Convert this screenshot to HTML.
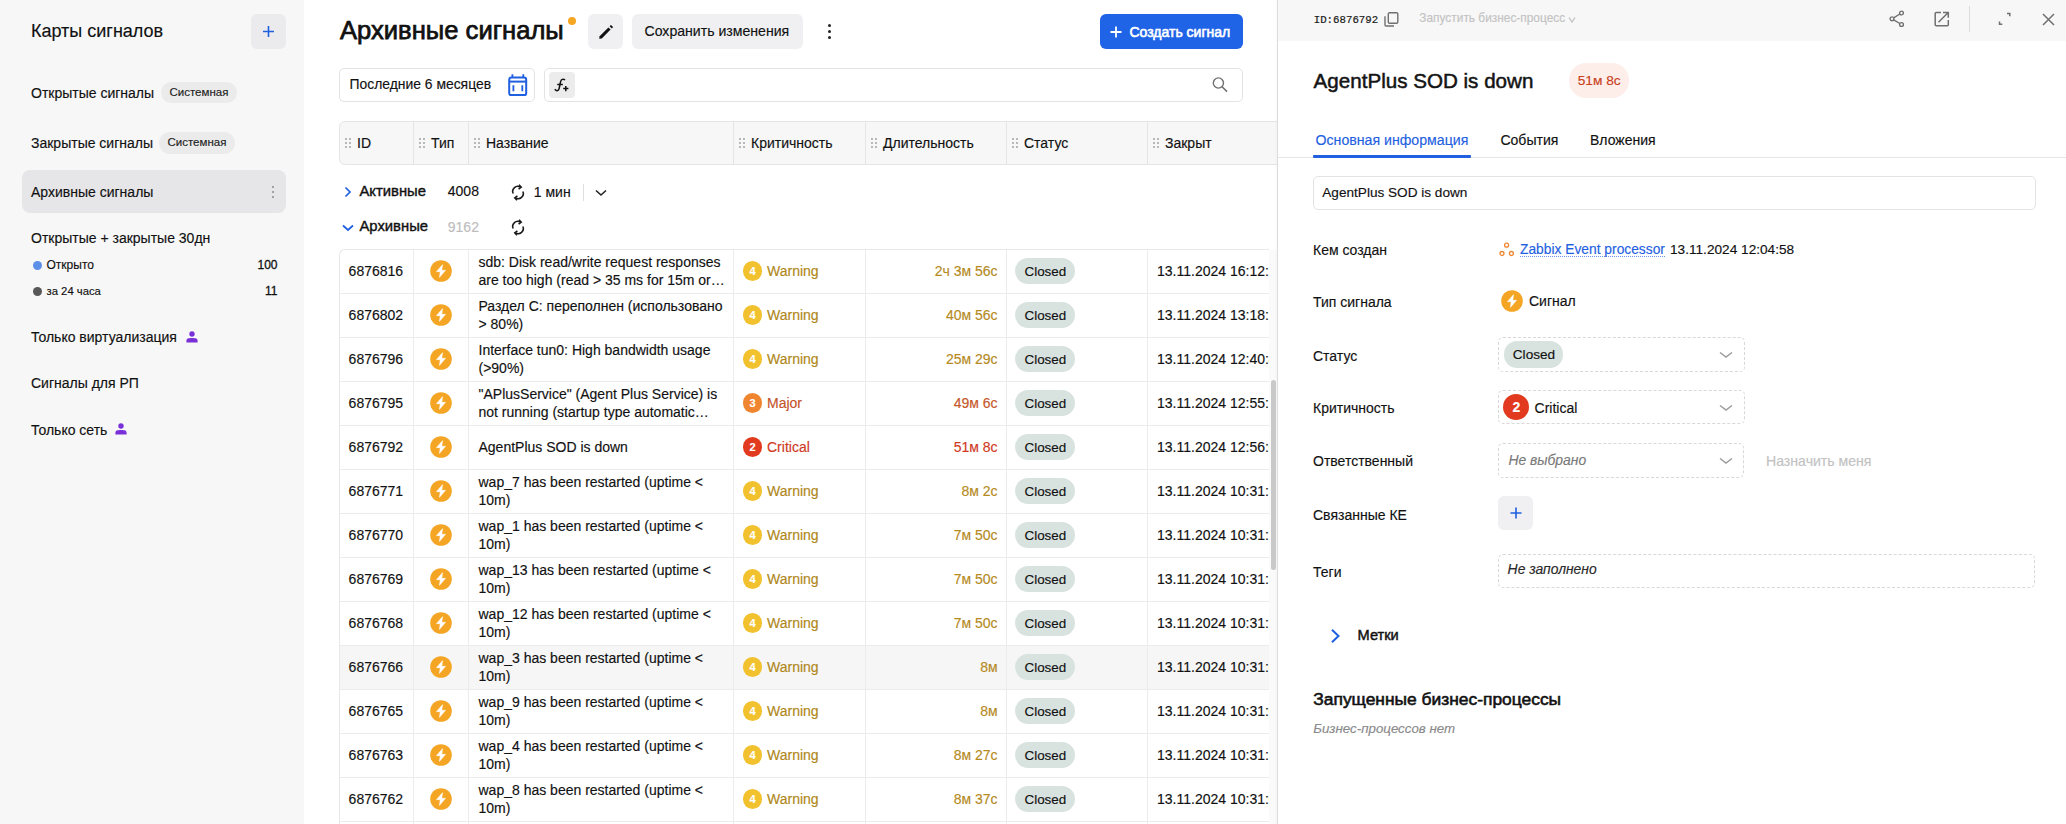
<!DOCTYPE html>
<html><head><meta charset="utf-8"><style>
html,body{margin:0;padding:0;}
body{width:2066px;height:824px;overflow:hidden;position:relative;background:#fff;font-family:"Liberation Sans", sans-serif;}
.t{position:absolute;white-space:nowrap;line-height:1;-webkit-text-stroke-width:0.15px;}
.r{position:absolute;display:block;}
</style></head><body>
<div class="r" style="left:0.00px;top:0.00px;width:304.00px;height:824.00px;background:#f7f7f7;"></div>
<div class="t" style="left:31.00px;top:22.26px;font-size:18px;color:#111111;font-weight:400;font-style:normal;font-family:'Liberation Sans', sans-serif;">Карты сигналов</div>
<div class="r" style="left:251.00px;top:14.00px;width:35.00px;height:35.00px;background:#ebebed;border-radius:6px;"></div>
<svg class="r" style="left:262.00px;top:25.00px;" width="13" height="13" viewBox="0 0 13 13"><path d="M6.5 1v11M1 6.5h11" stroke="#1f5fe0" stroke-width="1.6" fill="none"/></svg>
<div class="t" style="left:31.00px;top:86.15px;font-size:14px;color:#111111;font-weight:400;font-style:normal;font-family:'Liberation Sans', sans-serif;">Открытые сигналы</div>
<div class="r" style="left:161.00px;top:82.00px;width:76.00px;height:21.00px;background:#ebebeb;border-radius:11px;"></div>
<div class="t" style="left:169.50px;top:87.46px;font-size:11.5px;color:#222;font-weight:400;font-style:normal;font-family:'Liberation Sans', sans-serif;">Системная</div>
<div class="t" style="left:31.00px;top:136.15px;font-size:14px;color:#111111;font-weight:400;font-style:normal;font-family:'Liberation Sans', sans-serif;">Закрытые сигналы</div>
<div class="r" style="left:159.00px;top:132.00px;width:76.00px;height:22.00px;background:#ebebeb;border-radius:11px;"></div>
<div class="t" style="left:167.50px;top:137.46px;font-size:11.5px;color:#222;font-weight:400;font-style:normal;font-family:'Liberation Sans', sans-serif;">Системная</div>
<div class="r" style="left:22.00px;top:170.00px;width:264.00px;height:43.00px;background:#e6e6e8;border-radius:8px;"></div>
<div class="t" style="left:31.00px;top:185.15px;font-size:14px;color:#111111;font-weight:400;font-style:normal;font-family:'Liberation Sans', sans-serif;">Архивные сигналы</div>
<div class="r" style="left:272.00px;top:185.80px;width:2.40px;height:2.40px;background:#8a8a8a;border-radius:50%;"></div>
<div class="r" style="left:272.00px;top:190.80px;width:2.40px;height:2.40px;background:#8a8a8a;border-radius:50%;"></div>
<div class="r" style="left:272.00px;top:195.80px;width:2.40px;height:2.40px;background:#8a8a8a;border-radius:50%;"></div>
<div class="t" style="left:31.00px;top:230.85px;font-size:14px;color:#111111;font-weight:400;font-style:normal;font-family:'Liberation Sans', sans-serif;">Открытые + закрытые 30дн</div>
<div class="r" style="left:33.10px;top:260.50px;width:9.00px;height:9.00px;background:#5b8fe8;border-radius:50%;"></div>
<div class="t" style="left:46.50px;top:259.04px;font-size:12px;color:#111111;font-weight:400;font-style:normal;font-family:'Liberation Sans', sans-serif;">Открыто</div>
<div class="t" style="right:1788.50px;top:259.04px;font-size:12px;color:#111111;font-weight:400;font-style:normal;font-family:'Liberation Sans', sans-serif;-webkit-text-stroke:0.3px #111;">100</div>
<div class="r" style="left:32.90px;top:286.50px;width:9.00px;height:9.00px;background:#585858;border-radius:50%;"></div>
<div class="t" style="left:46.50px;top:285.83px;font-size:11.3px;color:#111111;font-weight:400;font-style:normal;font-family:'Liberation Sans', sans-serif;">за 24 часа</div>
<div class="t" style="right:1788.50px;top:285.24px;font-size:12px;color:#111111;font-weight:400;font-style:normal;font-family:'Liberation Sans', sans-serif;-webkit-text-stroke:0.3px #111;">11</div>
<div class="t" style="left:31.00px;top:330.15px;font-size:14px;color:#111111;font-weight:400;font-style:normal;font-family:'Liberation Sans', sans-serif;">Только виртуализация</div>
<svg class="r" style="left:186.00px;top:331.00px;" width="12" height="12" viewBox="0 0 12 12"><circle cx="6" cy="3" r="2.7" fill="#7a30d8"/><path d="M0.4 11.6 V9.8 C0.4 7.6 2 6.9 6 6.9 C10 6.9 11.6 7.6 11.6 9.8 V11.6 Z" fill="#7a30d8"/></svg>
<div class="t" style="left:31.00px;top:376.15px;font-size:14px;color:#111111;font-weight:400;font-style:normal;font-family:'Liberation Sans', sans-serif;">Сигналы для РП</div>
<div class="t" style="left:31.00px;top:422.75px;font-size:14px;color:#111111;font-weight:400;font-style:normal;font-family:'Liberation Sans', sans-serif;">Только сеть</div>
<svg class="r" style="left:114.80px;top:423.20px;" width="12" height="12" viewBox="0 0 12 12"><circle cx="6" cy="3" r="2.7" fill="#7a30d8"/><path d="M0.4 11.6 V9.8 C0.4 7.6 2 6.9 6 6.9 C10 6.9 11.6 7.6 11.6 9.8 V11.6 Z" fill="#7a30d8"/></svg>
<div class="t" style="left:340.00px;top:18.02px;font-size:25.6px;color:#111;font-weight:400;font-style:normal;font-family:'Liberation Sans', sans-serif;-webkit-text-stroke:0.75px #111;">Архивные сигналы</div>
<div class="r" style="left:568.00px;top:16.80px;width:8.00px;height:8.00px;background:#f5a623;border-radius:50%;"></div>
<div class="r" style="left:588.00px;top:14.00px;width:35.00px;height:35.00px;background:#f0f0f2;border-radius:6px;"></div>
<svg class="r" style="left:596.00px;top:22.00px;" width="20" height="20" viewBox="0 0 20 20"><path d="M3.2 16.8 L3.6 14.2 L12.4 5.4 L14.6 7.6 L5.8 16.4 Z" fill="#111"/><path d="M13.6 4.2 L14.9 2.9 L17.1 5.1 L15.8 6.4 Z" fill="#111"/></svg>
<div class="r" style="left:632.00px;top:14.00px;width:171.00px;height:35.00px;background:#f0f0f2;border-radius:6px;"></div>
<div class="t" style="left:644.50px;top:24.06px;font-size:14.1px;color:#111111;font-weight:400;font-style:normal;font-family:'Liberation Sans', sans-serif;">Сохранить изменения</div>
<div class="r" style="left:827.50px;top:24.00px;width:3.00px;height:3.00px;background:#222;border-radius:50%;"></div>
<div class="r" style="left:827.50px;top:30.00px;width:3.00px;height:3.00px;background:#222;border-radius:50%;"></div>
<div class="r" style="left:827.50px;top:36.00px;width:3.00px;height:3.00px;background:#222;border-radius:50%;"></div>
<div class="r" style="left:1100.00px;top:14.00px;width:142.50px;height:35.00px;background:#1f63e6;border-radius:6px;"></div>
<svg class="r" style="left:1110.00px;top:26.00px;" width="12" height="12" viewBox="0 0 12 12"><path d="M6 0.5v11M0.5 6h11" stroke="#fff" stroke-width="1.8" fill="none"/></svg>
<div class="t" style="left:1129.50px;top:24.65px;font-size:14px;color:#fff;font-weight:400;font-style:normal;font-family:'Liberation Sans', sans-serif;-webkit-text-stroke:0.6px #fff;">Создать сигнал</div>
<div class="r" style="left:339.00px;top:68.00px;width:196.00px;height:34.00px;background:#fff;border:1px solid #e3e3e3;border-radius:5px;box-sizing:border-box;"></div>
<div class="t" style="left:349.50px;top:77.83px;font-size:13.9px;color:#111111;font-weight:400;font-style:normal;font-family:'Liberation Sans', sans-serif;">Последние 6 месяцев</div>
<svg class="r" style="left:507.00px;top:73.00px;" width="22" height="24" viewBox="0 0 22 24"><rect x="2.2" y="4.5" width="17" height="17.6" rx="2.2" fill="none" stroke="#1f5fe0" stroke-width="2"/><path d="M2.2 8.6h17" stroke="#1f5fe0" stroke-width="2"/><path d="M5.4 1.2v3.8M16.3 1.2v3.8M6.4 12.3v6M15.3 12.3v6" stroke="#1f5fe0" stroke-width="1.8"/></svg>
<div class="r" style="left:544.00px;top:68.00px;width:699.00px;height:34.00px;background:#fff;border:1px solid #e3e3e3;border-radius:5px;box-sizing:border-box;"></div>
<div class="r" style="left:549.00px;top:72.00px;width:26.00px;height:26.00px;background:#ececec;border-radius:4px;"></div>
<svg class="r" style="left:549.00px;top:72.00px;" width="26" height="26" viewBox="0 0 26 26"><path d="M6.2 17.6 C7 19 9.3 19.2 10 17 C10.6 15 11.2 10.5 11.8 9 C12.4 7.3 14 6.8 15.6 7.6" fill="none" stroke="#111" stroke-width="1.5" stroke-linecap="round"/><path d="M8.3 12.5 H13.8" stroke="#111" stroke-width="1.5"/><path d="M16.8 14 V19.2 M14.2 16.6 H19.4" stroke="#111" stroke-width="1.5"/></svg>
<svg class="r" style="left:1211.00px;top:75.00px;" width="18" height="18" viewBox="0 0 18 18"><circle cx="7.4" cy="8" r="5.1" fill="none" stroke="#707070" stroke-width="1.4"/><path d="M11.1 11.7 L16 16.6" stroke="#707070" stroke-width="1.6"/></svg>
<div class="r" style="left:339.00px;top:121.00px;width:951.00px;height:44.00px;background:#f7f7f7;border:1px solid #e5e5e5;border-radius:6px 0 0 6px;box-sizing:border-box;"></div>
<svg class="r" style="left:344.50px;top:138.00px;" width="6" height="10" viewBox="0 0 6 10"><circle cx="1" cy="1" r="0.9" fill="#9a9a9a"/><circle cx="1" cy="5" r="0.9" fill="#9a9a9a"/><circle cx="1" cy="9" r="0.9" fill="#9a9a9a"/><circle cx="5" cy="1" r="0.9" fill="#9a9a9a"/><circle cx="5" cy="5" r="0.9" fill="#9a9a9a"/><circle cx="5" cy="9" r="0.9" fill="#9a9a9a"/></svg>
<div class="t" style="left:357.00px;top:136.15px;font-size:14px;color:#111111;font-weight:400;font-style:normal;font-family:'Liberation Sans', sans-serif;">ID</div>
<div class="r" style="left:413.00px;top:122.00px;width:1.00px;height:42.00px;background:#e5e5e5;"></div>
<svg class="r" style="left:418.50px;top:138.00px;" width="6" height="10" viewBox="0 0 6 10"><circle cx="1" cy="1" r="0.9" fill="#9a9a9a"/><circle cx="1" cy="5" r="0.9" fill="#9a9a9a"/><circle cx="1" cy="9" r="0.9" fill="#9a9a9a"/><circle cx="5" cy="1" r="0.9" fill="#9a9a9a"/><circle cx="5" cy="5" r="0.9" fill="#9a9a9a"/><circle cx="5" cy="9" r="0.9" fill="#9a9a9a"/></svg>
<div class="t" style="left:431.00px;top:136.15px;font-size:14px;color:#111111;font-weight:400;font-style:normal;font-family:'Liberation Sans', sans-serif;">Тип</div>
<div class="r" style="left:468.00px;top:122.00px;width:1.00px;height:42.00px;background:#e5e5e5;"></div>
<svg class="r" style="left:473.50px;top:138.00px;" width="6" height="10" viewBox="0 0 6 10"><circle cx="1" cy="1" r="0.9" fill="#9a9a9a"/><circle cx="1" cy="5" r="0.9" fill="#9a9a9a"/><circle cx="1" cy="9" r="0.9" fill="#9a9a9a"/><circle cx="5" cy="1" r="0.9" fill="#9a9a9a"/><circle cx="5" cy="5" r="0.9" fill="#9a9a9a"/><circle cx="5" cy="9" r="0.9" fill="#9a9a9a"/></svg>
<div class="t" style="left:486.00px;top:136.15px;font-size:14px;color:#111111;font-weight:400;font-style:normal;font-family:'Liberation Sans', sans-serif;">Название</div>
<div class="r" style="left:733.00px;top:122.00px;width:1.00px;height:42.00px;background:#e5e5e5;"></div>
<svg class="r" style="left:738.50px;top:138.00px;" width="6" height="10" viewBox="0 0 6 10"><circle cx="1" cy="1" r="0.9" fill="#9a9a9a"/><circle cx="1" cy="5" r="0.9" fill="#9a9a9a"/><circle cx="1" cy="9" r="0.9" fill="#9a9a9a"/><circle cx="5" cy="1" r="0.9" fill="#9a9a9a"/><circle cx="5" cy="5" r="0.9" fill="#9a9a9a"/><circle cx="5" cy="9" r="0.9" fill="#9a9a9a"/></svg>
<div class="t" style="left:751.00px;top:136.15px;font-size:14px;color:#111111;font-weight:400;font-style:normal;font-family:'Liberation Sans', sans-serif;">Критичность</div>
<div class="r" style="left:865.00px;top:122.00px;width:1.00px;height:42.00px;background:#e5e5e5;"></div>
<svg class="r" style="left:870.50px;top:138.00px;" width="6" height="10" viewBox="0 0 6 10"><circle cx="1" cy="1" r="0.9" fill="#9a9a9a"/><circle cx="1" cy="5" r="0.9" fill="#9a9a9a"/><circle cx="1" cy="9" r="0.9" fill="#9a9a9a"/><circle cx="5" cy="1" r="0.9" fill="#9a9a9a"/><circle cx="5" cy="5" r="0.9" fill="#9a9a9a"/><circle cx="5" cy="9" r="0.9" fill="#9a9a9a"/></svg>
<div class="t" style="left:883.00px;top:136.15px;font-size:14px;color:#111111;font-weight:400;font-style:normal;font-family:'Liberation Sans', sans-serif;">Длительность</div>
<div class="r" style="left:1006.00px;top:122.00px;width:1.00px;height:42.00px;background:#e5e5e5;"></div>
<svg class="r" style="left:1011.50px;top:138.00px;" width="6" height="10" viewBox="0 0 6 10"><circle cx="1" cy="1" r="0.9" fill="#9a9a9a"/><circle cx="1" cy="5" r="0.9" fill="#9a9a9a"/><circle cx="1" cy="9" r="0.9" fill="#9a9a9a"/><circle cx="5" cy="1" r="0.9" fill="#9a9a9a"/><circle cx="5" cy="5" r="0.9" fill="#9a9a9a"/><circle cx="5" cy="9" r="0.9" fill="#9a9a9a"/></svg>
<div class="t" style="left:1024.00px;top:136.15px;font-size:14px;color:#111111;font-weight:400;font-style:normal;font-family:'Liberation Sans', sans-serif;">Статус</div>
<div class="r" style="left:1147.00px;top:122.00px;width:1.00px;height:42.00px;background:#e5e5e5;"></div>
<svg class="r" style="left:1152.50px;top:138.00px;" width="6" height="10" viewBox="0 0 6 10"><circle cx="1" cy="1" r="0.9" fill="#9a9a9a"/><circle cx="1" cy="5" r="0.9" fill="#9a9a9a"/><circle cx="1" cy="9" r="0.9" fill="#9a9a9a"/><circle cx="5" cy="1" r="0.9" fill="#9a9a9a"/><circle cx="5" cy="5" r="0.9" fill="#9a9a9a"/><circle cx="5" cy="9" r="0.9" fill="#9a9a9a"/></svg>
<div class="t" style="left:1165.00px;top:136.15px;font-size:14px;color:#111111;font-weight:400;font-style:normal;font-family:'Liberation Sans', sans-serif;">Закрыт</div>
<svg class="r" style="left:344.00px;top:186.00px;" width="8" height="12" viewBox="0 0 8 12"><path d="M1.5 1.5 L6 6 L1.5 10.5" fill="none" stroke="#1f5fe0" stroke-width="1.7"/></svg>
<div class="t" style="left:359.50px;top:183.77px;font-size:14.8px;color:#111111;font-weight:400;font-style:normal;font-family:'Liberation Sans', sans-serif;-webkit-text-stroke:0.4px #111;">Активные</div>
<div class="t" style="left:447.80px;top:184.45px;font-size:14px;color:#111111;font-weight:400;font-style:normal;font-family:'Liberation Sans', sans-serif;">4008</div>
<svg class="r" style="left:510.50px;top:183.50px;" width="14" height="17" viewBox="0 0 14 17"><path d="M2.2 9.5 A5 5 0 0 1 9.5 3.2" fill="none" stroke="#1a1a1a" stroke-width="1.6"/><path d="M8 0.8 L10.2 3.2 L7.6 5.2" fill="none" stroke="#1a1a1a" stroke-width="1.6"/><path d="M11.8 7.5 A5 5 0 0 1 4.5 13.8" fill="none" stroke="#1a1a1a" stroke-width="1.6"/><path d="M6 16.2 L3.8 13.8 L6.4 11.8" fill="none" stroke="#1a1a1a" stroke-width="1.6"/></svg>
<div class="t" style="left:533.80px;top:184.75px;font-size:14px;color:#111111;font-weight:400;font-style:normal;font-family:'Liberation Sans', sans-serif;">1 мин</div>
<div class="r" style="left:582.50px;top:183.50px;width:1.50px;height:17.50px;background:#dedede;"></div>
<svg class="r" style="left:595.00px;top:189.00px;" width="12" height="8" viewBox="0 0 12 8"><path d="M1 1.5 L6.0 6 L11 1.5" fill="none" stroke="#222" stroke-width="1.6"/></svg>
<svg class="r" style="left:342.00px;top:223.50px;" width="12" height="8" viewBox="0 0 12 8"><path d="M1 1.5 L6.0 6 L11 1.5" fill="none" stroke="#1f5fe0" stroke-width="1.7"/></svg>
<div class="t" style="left:359.50px;top:219.17px;font-size:14.8px;color:#111111;font-weight:400;font-style:normal;font-family:'Liberation Sans', sans-serif;-webkit-text-stroke:0.4px #111;">Архивные</div>
<div class="t" style="left:447.80px;top:219.85px;font-size:14px;color:#bdbdbd;font-weight:400;font-style:normal;font-family:'Liberation Sans', sans-serif;">9162</div>
<svg class="r" style="left:510.50px;top:218.50px;" width="14" height="17" viewBox="0 0 14 17"><path d="M2.2 9.5 A5 5 0 0 1 9.5 3.2" fill="none" stroke="#1a1a1a" stroke-width="1.6"/><path d="M8 0.8 L10.2 3.2 L7.6 5.2" fill="none" stroke="#1a1a1a" stroke-width="1.6"/><path d="M11.8 7.5 A5 5 0 0 1 4.5 13.8" fill="none" stroke="#1a1a1a" stroke-width="1.6"/><path d="M6 16.2 L3.8 13.8 L6.4 11.8" fill="none" stroke="#1a1a1a" stroke-width="1.6"/></svg>
<div class="r" style="left:339px;top:249px;width:930px;height:580px;overflow:hidden;border-top-left-radius:6px;border-top:1px solid #e8e8e8;border-left:1px solid #e8e8e8;box-sizing:border-box;">
<div class="r" style="left:-0.50px;top:43.00px;width:929.50px;height:1.00px;background:#ececec;"></div><div class="t" style="left:8.60px;top:14.05px;font-size:14px;color:#111111;font-weight:400;">6876816</div><svg class="r" style="left:90.30px;top:10.00px;" width="22" height="22" viewBox="0 0 22 22"><circle cx="11" cy="11" r="10.8" fill="#f5a524"/><path d="M12.6 4.6 L6.4 11.7 L10.2 11.7 L9.4 17.4 L15.6 10.3 L11.8 10.3 Z" fill="#fff" stroke="#fff" stroke-width="0.5" stroke-linejoin="round"/></svg><div class="t" style="left:138.50px;top:4.95px;font-size:14px;color:#111111;font-weight:400;">sdb: Disk read/write request responses</div><div class="t" style="left:138.50px;top:22.85px;font-size:14px;color:#111111;font-weight:400;">are too high (read &gt; 35 ms for 15m or…</div><div class="r" style="left:402.80px;top:11.00px;width:19.50px;height:19.50px;background:#f2c12e;border-radius:50%;"></div><div class="t" style="left:412.55px;top:16.19px;font-size:11px;color:#fff;font-weight:700;transform:translateX(-50%);">4</div><div class="t" style="left:427.00px;top:14.05px;font-size:14px;color:#b0871a;font-weight:400;">Warning</div><div class="t" style="right:271.40px;top:14.05px;font-size:14px;color:#b58a1e;font-weight:400;">2ч 3м 56с</div><div class="r" style="left:675.30px;top:8.00px;width:59.90px;height:26.00px;background:#d8e3e0;border-radius:13px;"></div><div class="t" style="left:684.50px;top:14.55px;font-size:13.4px;color:#111111;font-weight:400;">Closed</div><div class="t" style="left:817.00px;top:14.05px;font-size:14px;color:#111111;font-weight:400;">13.11.2024 16:12:5</div><div class="r" style="left:-0.50px;top:87.00px;width:929.50px;height:1.00px;background:#ececec;"></div><div class="t" style="left:8.60px;top:58.05px;font-size:14px;color:#111111;font-weight:400;">6876802</div><svg class="r" style="left:90.30px;top:54.00px;" width="22" height="22" viewBox="0 0 22 22"><circle cx="11" cy="11" r="10.8" fill="#f5a524"/><path d="M12.6 4.6 L6.4 11.7 L10.2 11.7 L9.4 17.4 L15.6 10.3 L11.8 10.3 Z" fill="#fff" stroke="#fff" stroke-width="0.5" stroke-linejoin="round"/></svg><div class="t" style="left:138.50px;top:48.95px;font-size:14px;color:#111111;font-weight:400;">Раздел C: переполнен (использовано</div><div class="t" style="left:138.50px;top:66.85px;font-size:14px;color:#111111;font-weight:400;">&gt; 80%)</div><div class="r" style="left:402.80px;top:55.00px;width:19.50px;height:19.50px;background:#f2c12e;border-radius:50%;"></div><div class="t" style="left:412.55px;top:60.19px;font-size:11px;color:#fff;font-weight:700;transform:translateX(-50%);">4</div><div class="t" style="left:427.00px;top:58.05px;font-size:14px;color:#b0871a;font-weight:400;">Warning</div><div class="t" style="right:271.40px;top:58.05px;font-size:14px;color:#b58a1e;font-weight:400;">40м 56с</div><div class="r" style="left:675.30px;top:52.00px;width:59.90px;height:26.00px;background:#d8e3e0;border-radius:13px;"></div><div class="t" style="left:684.50px;top:58.55px;font-size:13.4px;color:#111111;font-weight:400;">Closed</div><div class="t" style="left:817.00px;top:58.05px;font-size:14px;color:#111111;font-weight:400;">13.11.2024 13:18:2</div><div class="r" style="left:-0.50px;top:131.00px;width:929.50px;height:1.00px;background:#ececec;"></div><div class="t" style="left:8.60px;top:102.05px;font-size:14px;color:#111111;font-weight:400;">6876796</div><svg class="r" style="left:90.30px;top:98.00px;" width="22" height="22" viewBox="0 0 22 22"><circle cx="11" cy="11" r="10.8" fill="#f5a524"/><path d="M12.6 4.6 L6.4 11.7 L10.2 11.7 L9.4 17.4 L15.6 10.3 L11.8 10.3 Z" fill="#fff" stroke="#fff" stroke-width="0.5" stroke-linejoin="round"/></svg><div class="t" style="left:138.50px;top:92.95px;font-size:14px;color:#111111;font-weight:400;">Interface tun0: High bandwidth usage</div><div class="t" style="left:138.50px;top:110.85px;font-size:14px;color:#111111;font-weight:400;">(&gt;90%)</div><div class="r" style="left:402.80px;top:99.00px;width:19.50px;height:19.50px;background:#f2c12e;border-radius:50%;"></div><div class="t" style="left:412.55px;top:104.19px;font-size:11px;color:#fff;font-weight:700;transform:translateX(-50%);">4</div><div class="t" style="left:427.00px;top:102.05px;font-size:14px;color:#b0871a;font-weight:400;">Warning</div><div class="t" style="right:271.40px;top:102.05px;font-size:14px;color:#b58a1e;font-weight:400;">25м 29с</div><div class="r" style="left:675.30px;top:96.00px;width:59.90px;height:26.00px;background:#d8e3e0;border-radius:13px;"></div><div class="t" style="left:684.50px;top:102.55px;font-size:13.4px;color:#111111;font-weight:400;">Closed</div><div class="t" style="left:817.00px;top:102.05px;font-size:14px;color:#111111;font-weight:400;">13.11.2024 12:40:4</div><div class="r" style="left:-0.50px;top:175.00px;width:929.50px;height:1.00px;background:#ececec;"></div><div class="t" style="left:8.60px;top:146.05px;font-size:14px;color:#111111;font-weight:400;">6876795</div><svg class="r" style="left:90.30px;top:142.00px;" width="22" height="22" viewBox="0 0 22 22"><circle cx="11" cy="11" r="10.8" fill="#f5a524"/><path d="M12.6 4.6 L6.4 11.7 L10.2 11.7 L9.4 17.4 L15.6 10.3 L11.8 10.3 Z" fill="#fff" stroke="#fff" stroke-width="0.5" stroke-linejoin="round"/></svg><div class="t" style="left:138.50px;top:136.95px;font-size:14px;color:#111111;font-weight:400;">"APlusService" (Agent Plus Service) is</div><div class="t" style="left:138.50px;top:154.85px;font-size:14px;color:#111111;font-weight:400;">not running (startup type automatic…</div><div class="r" style="left:402.80px;top:143.00px;width:19.50px;height:19.50px;background:#f0852f;border-radius:50%;"></div><div class="t" style="left:412.55px;top:148.19px;font-size:11px;color:#fff;font-weight:700;transform:translateX(-50%);">3</div><div class="t" style="left:427.00px;top:146.05px;font-size:14px;color:#c4522a;font-weight:400;">Major</div><div class="t" style="right:271.40px;top:146.05px;font-size:14px;color:#c5572a;font-weight:400;">49м 6с</div><div class="r" style="left:675.30px;top:140.00px;width:59.90px;height:26.00px;background:#d8e3e0;border-radius:13px;"></div><div class="t" style="left:684.50px;top:146.55px;font-size:13.4px;color:#111111;font-weight:400;">Closed</div><div class="t" style="left:817.00px;top:146.05px;font-size:14px;color:#111111;font-weight:400;">13.11.2024 12:55:2</div><div class="r" style="left:-0.50px;top:219.00px;width:929.50px;height:1.00px;background:#ececec;"></div><div class="t" style="left:8.60px;top:190.05px;font-size:14px;color:#111111;font-weight:400;">6876792</div><svg class="r" style="left:90.30px;top:186.00px;" width="22" height="22" viewBox="0 0 22 22"><circle cx="11" cy="11" r="10.8" fill="#f5a524"/><path d="M12.6 4.6 L6.4 11.7 L10.2 11.7 L9.4 17.4 L15.6 10.3 L11.8 10.3 Z" fill="#fff" stroke="#fff" stroke-width="0.5" stroke-linejoin="round"/></svg><div class="t" style="left:138.50px;top:190.05px;font-size:14px;color:#111111;font-weight:400;">AgentPlus SOD is down</div><div class="r" style="left:402.80px;top:187.00px;width:19.50px;height:19.50px;background:#e23a1e;border-radius:50%;"></div><div class="t" style="left:412.55px;top:192.19px;font-size:11px;color:#fff;font-weight:700;transform:translateX(-50%);">2</div><div class="t" style="left:427.00px;top:190.05px;font-size:14px;color:#cf3a1f;font-weight:400;">Critical</div><div class="t" style="right:271.40px;top:190.05px;font-size:14px;color:#cf3a1f;font-weight:400;">51м 8с</div><div class="r" style="left:675.30px;top:184.00px;width:59.90px;height:26.00px;background:#d8e3e0;border-radius:13px;"></div><div class="t" style="left:684.50px;top:190.55px;font-size:13.4px;color:#111111;font-weight:400;">Closed</div><div class="t" style="left:817.00px;top:190.05px;font-size:14px;color:#111111;font-weight:400;">13.11.2024 12:56:0</div><div class="r" style="left:-0.50px;top:263.00px;width:929.50px;height:1.00px;background:#ececec;"></div><div class="t" style="left:8.60px;top:234.05px;font-size:14px;color:#111111;font-weight:400;">6876771</div><svg class="r" style="left:90.30px;top:230.00px;" width="22" height="22" viewBox="0 0 22 22"><circle cx="11" cy="11" r="10.8" fill="#f5a524"/><path d="M12.6 4.6 L6.4 11.7 L10.2 11.7 L9.4 17.4 L15.6 10.3 L11.8 10.3 Z" fill="#fff" stroke="#fff" stroke-width="0.5" stroke-linejoin="round"/></svg><div class="t" style="left:138.50px;top:224.95px;font-size:14px;color:#111111;font-weight:400;">wap_7 has been restarted (uptime &lt;</div><div class="t" style="left:138.50px;top:242.85px;font-size:14px;color:#111111;font-weight:400;">10m)</div><div class="r" style="left:402.80px;top:231.00px;width:19.50px;height:19.50px;background:#f2c12e;border-radius:50%;"></div><div class="t" style="left:412.55px;top:236.19px;font-size:11px;color:#fff;font-weight:700;transform:translateX(-50%);">4</div><div class="t" style="left:427.00px;top:234.05px;font-size:14px;color:#b0871a;font-weight:400;">Warning</div><div class="t" style="right:271.40px;top:234.05px;font-size:14px;color:#b58a1e;font-weight:400;">8м 2с</div><div class="r" style="left:675.30px;top:228.00px;width:59.90px;height:26.00px;background:#d8e3e0;border-radius:13px;"></div><div class="t" style="left:684.50px;top:234.55px;font-size:13.4px;color:#111111;font-weight:400;">Closed</div><div class="t" style="left:817.00px;top:234.05px;font-size:14px;color:#111111;font-weight:400;">13.11.2024 10:31:3</div><div class="r" style="left:-0.50px;top:307.00px;width:929.50px;height:1.00px;background:#ececec;"></div><div class="t" style="left:8.60px;top:278.05px;font-size:14px;color:#111111;font-weight:400;">6876770</div><svg class="r" style="left:90.30px;top:274.00px;" width="22" height="22" viewBox="0 0 22 22"><circle cx="11" cy="11" r="10.8" fill="#f5a524"/><path d="M12.6 4.6 L6.4 11.7 L10.2 11.7 L9.4 17.4 L15.6 10.3 L11.8 10.3 Z" fill="#fff" stroke="#fff" stroke-width="0.5" stroke-linejoin="round"/></svg><div class="t" style="left:138.50px;top:268.95px;font-size:14px;color:#111111;font-weight:400;">wap_1 has been restarted (uptime &lt;</div><div class="t" style="left:138.50px;top:286.85px;font-size:14px;color:#111111;font-weight:400;">10m)</div><div class="r" style="left:402.80px;top:275.00px;width:19.50px;height:19.50px;background:#f2c12e;border-radius:50%;"></div><div class="t" style="left:412.55px;top:280.19px;font-size:11px;color:#fff;font-weight:700;transform:translateX(-50%);">4</div><div class="t" style="left:427.00px;top:278.05px;font-size:14px;color:#b0871a;font-weight:400;">Warning</div><div class="t" style="right:271.40px;top:278.05px;font-size:14px;color:#b58a1e;font-weight:400;">7м 50с</div><div class="r" style="left:675.30px;top:272.00px;width:59.90px;height:26.00px;background:#d8e3e0;border-radius:13px;"></div><div class="t" style="left:684.50px;top:278.55px;font-size:13.4px;color:#111111;font-weight:400;">Closed</div><div class="t" style="left:817.00px;top:278.05px;font-size:14px;color:#111111;font-weight:400;">13.11.2024 10:31:1</div><div class="r" style="left:-0.50px;top:351.00px;width:929.50px;height:1.00px;background:#ececec;"></div><div class="t" style="left:8.60px;top:322.05px;font-size:14px;color:#111111;font-weight:400;">6876769</div><svg class="r" style="left:90.30px;top:318.00px;" width="22" height="22" viewBox="0 0 22 22"><circle cx="11" cy="11" r="10.8" fill="#f5a524"/><path d="M12.6 4.6 L6.4 11.7 L10.2 11.7 L9.4 17.4 L15.6 10.3 L11.8 10.3 Z" fill="#fff" stroke="#fff" stroke-width="0.5" stroke-linejoin="round"/></svg><div class="t" style="left:138.50px;top:312.95px;font-size:14px;color:#111111;font-weight:400;">wap_13 has been restarted (uptime &lt;</div><div class="t" style="left:138.50px;top:330.85px;font-size:14px;color:#111111;font-weight:400;">10m)</div><div class="r" style="left:402.80px;top:319.00px;width:19.50px;height:19.50px;background:#f2c12e;border-radius:50%;"></div><div class="t" style="left:412.55px;top:324.19px;font-size:11px;color:#fff;font-weight:700;transform:translateX(-50%);">4</div><div class="t" style="left:427.00px;top:322.05px;font-size:14px;color:#b0871a;font-weight:400;">Warning</div><div class="t" style="right:271.40px;top:322.05px;font-size:14px;color:#b58a1e;font-weight:400;">7м 50с</div><div class="r" style="left:675.30px;top:316.00px;width:59.90px;height:26.00px;background:#d8e3e0;border-radius:13px;"></div><div class="t" style="left:684.50px;top:322.55px;font-size:13.4px;color:#111111;font-weight:400;">Closed</div><div class="t" style="left:817.00px;top:322.05px;font-size:14px;color:#111111;font-weight:400;">13.11.2024 10:31:1</div><div class="r" style="left:-0.50px;top:395.00px;width:929.50px;height:1.00px;background:#ececec;"></div><div class="t" style="left:8.60px;top:366.05px;font-size:14px;color:#111111;font-weight:400;">6876768</div><svg class="r" style="left:90.30px;top:362.00px;" width="22" height="22" viewBox="0 0 22 22"><circle cx="11" cy="11" r="10.8" fill="#f5a524"/><path d="M12.6 4.6 L6.4 11.7 L10.2 11.7 L9.4 17.4 L15.6 10.3 L11.8 10.3 Z" fill="#fff" stroke="#fff" stroke-width="0.5" stroke-linejoin="round"/></svg><div class="t" style="left:138.50px;top:356.95px;font-size:14px;color:#111111;font-weight:400;">wap_12 has been restarted (uptime &lt;</div><div class="t" style="left:138.50px;top:374.85px;font-size:14px;color:#111111;font-weight:400;">10m)</div><div class="r" style="left:402.80px;top:363.00px;width:19.50px;height:19.50px;background:#f2c12e;border-radius:50%;"></div><div class="t" style="left:412.55px;top:368.19px;font-size:11px;color:#fff;font-weight:700;transform:translateX(-50%);">4</div><div class="t" style="left:427.00px;top:366.05px;font-size:14px;color:#b0871a;font-weight:400;">Warning</div><div class="t" style="right:271.40px;top:366.05px;font-size:14px;color:#b58a1e;font-weight:400;">7м 50с</div><div class="r" style="left:675.30px;top:360.00px;width:59.90px;height:26.00px;background:#d8e3e0;border-radius:13px;"></div><div class="t" style="left:684.50px;top:366.55px;font-size:13.4px;color:#111111;font-weight:400;">Closed</div><div class="t" style="left:817.00px;top:366.05px;font-size:14px;color:#111111;font-weight:400;">13.11.2024 10:31:1</div><div class="r" style="left:-0.50px;top:395.50px;width:929.50px;height:44.00px;background:#f6f6f6;"></div><div class="r" style="left:-0.50px;top:439.00px;width:929.50px;height:1.00px;background:#ececec;"></div><div class="t" style="left:8.60px;top:410.05px;font-size:14px;color:#111111;font-weight:400;">6876766</div><svg class="r" style="left:90.30px;top:406.00px;" width="22" height="22" viewBox="0 0 22 22"><circle cx="11" cy="11" r="10.8" fill="#f5a524"/><path d="M12.6 4.6 L6.4 11.7 L10.2 11.7 L9.4 17.4 L15.6 10.3 L11.8 10.3 Z" fill="#fff" stroke="#fff" stroke-width="0.5" stroke-linejoin="round"/></svg><div class="t" style="left:138.50px;top:400.95px;font-size:14px;color:#111111;font-weight:400;">wap_3 has been restarted (uptime &lt;</div><div class="t" style="left:138.50px;top:418.85px;font-size:14px;color:#111111;font-weight:400;">10m)</div><div class="r" style="left:402.80px;top:407.00px;width:19.50px;height:19.50px;background:#f2c12e;border-radius:50%;"></div><div class="t" style="left:412.55px;top:412.19px;font-size:11px;color:#fff;font-weight:700;transform:translateX(-50%);">4</div><div class="t" style="left:427.00px;top:410.05px;font-size:14px;color:#b0871a;font-weight:400;">Warning</div><div class="t" style="right:271.40px;top:410.05px;font-size:14px;color:#b58a1e;font-weight:400;">8м</div><div class="r" style="left:675.30px;top:404.00px;width:59.90px;height:26.00px;background:#d8e3e0;border-radius:13px;"></div><div class="t" style="left:684.50px;top:410.55px;font-size:13.4px;color:#111111;font-weight:400;">Closed</div><div class="t" style="left:817.00px;top:410.05px;font-size:14px;color:#111111;font-weight:400;">13.11.2024 10:31:0</div><div class="r" style="left:-0.50px;top:483.00px;width:929.50px;height:1.00px;background:#ececec;"></div><div class="t" style="left:8.60px;top:454.05px;font-size:14px;color:#111111;font-weight:400;">6876765</div><svg class="r" style="left:90.30px;top:450.00px;" width="22" height="22" viewBox="0 0 22 22"><circle cx="11" cy="11" r="10.8" fill="#f5a524"/><path d="M12.6 4.6 L6.4 11.7 L10.2 11.7 L9.4 17.4 L15.6 10.3 L11.8 10.3 Z" fill="#fff" stroke="#fff" stroke-width="0.5" stroke-linejoin="round"/></svg><div class="t" style="left:138.50px;top:444.95px;font-size:14px;color:#111111;font-weight:400;">wap_9 has been restarted (uptime &lt;</div><div class="t" style="left:138.50px;top:462.85px;font-size:14px;color:#111111;font-weight:400;">10m)</div><div class="r" style="left:402.80px;top:451.00px;width:19.50px;height:19.50px;background:#f2c12e;border-radius:50%;"></div><div class="t" style="left:412.55px;top:456.19px;font-size:11px;color:#fff;font-weight:700;transform:translateX(-50%);">4</div><div class="t" style="left:427.00px;top:454.05px;font-size:14px;color:#b0871a;font-weight:400;">Warning</div><div class="t" style="right:271.40px;top:454.05px;font-size:14px;color:#b58a1e;font-weight:400;">8м</div><div class="r" style="left:675.30px;top:448.00px;width:59.90px;height:26.00px;background:#d8e3e0;border-radius:13px;"></div><div class="t" style="left:684.50px;top:454.55px;font-size:13.4px;color:#111111;font-weight:400;">Closed</div><div class="t" style="left:817.00px;top:454.05px;font-size:14px;color:#111111;font-weight:400;">13.11.2024 10:31:0</div><div class="r" style="left:-0.50px;top:527.00px;width:929.50px;height:1.00px;background:#ececec;"></div><div class="t" style="left:8.60px;top:498.05px;font-size:14px;color:#111111;font-weight:400;">6876763</div><svg class="r" style="left:90.30px;top:494.00px;" width="22" height="22" viewBox="0 0 22 22"><circle cx="11" cy="11" r="10.8" fill="#f5a524"/><path d="M12.6 4.6 L6.4 11.7 L10.2 11.7 L9.4 17.4 L15.6 10.3 L11.8 10.3 Z" fill="#fff" stroke="#fff" stroke-width="0.5" stroke-linejoin="round"/></svg><div class="t" style="left:138.50px;top:488.95px;font-size:14px;color:#111111;font-weight:400;">wap_4 has been restarted (uptime &lt;</div><div class="t" style="left:138.50px;top:506.85px;font-size:14px;color:#111111;font-weight:400;">10m)</div><div class="r" style="left:402.80px;top:495.00px;width:19.50px;height:19.50px;background:#f2c12e;border-radius:50%;"></div><div class="t" style="left:412.55px;top:500.19px;font-size:11px;color:#fff;font-weight:700;transform:translateX(-50%);">4</div><div class="t" style="left:427.00px;top:498.05px;font-size:14px;color:#b0871a;font-weight:400;">Warning</div><div class="t" style="right:271.40px;top:498.05px;font-size:14px;color:#b58a1e;font-weight:400;">8м 27с</div><div class="r" style="left:675.30px;top:492.00px;width:59.90px;height:26.00px;background:#d8e3e0;border-radius:13px;"></div><div class="t" style="left:684.50px;top:498.55px;font-size:13.4px;color:#111111;font-weight:400;">Closed</div><div class="t" style="left:817.00px;top:498.05px;font-size:14px;color:#111111;font-weight:400;">13.11.2024 10:31:1</div><div class="r" style="left:-0.50px;top:571.00px;width:929.50px;height:1.00px;background:#ececec;"></div><div class="t" style="left:8.60px;top:542.05px;font-size:14px;color:#111111;font-weight:400;">6876762</div><svg class="r" style="left:90.30px;top:538.00px;" width="22" height="22" viewBox="0 0 22 22"><circle cx="11" cy="11" r="10.8" fill="#f5a524"/><path d="M12.6 4.6 L6.4 11.7 L10.2 11.7 L9.4 17.4 L15.6 10.3 L11.8 10.3 Z" fill="#fff" stroke="#fff" stroke-width="0.5" stroke-linejoin="round"/></svg><div class="t" style="left:138.50px;top:532.95px;font-size:14px;color:#111111;font-weight:400;">wap_8 has been restarted (uptime &lt;</div><div class="t" style="left:138.50px;top:550.85px;font-size:14px;color:#111111;font-weight:400;">10m)</div><div class="r" style="left:402.80px;top:539.00px;width:19.50px;height:19.50px;background:#f2c12e;border-radius:50%;"></div><div class="t" style="left:412.55px;top:544.19px;font-size:11px;color:#fff;font-weight:700;transform:translateX(-50%);">4</div><div class="t" style="left:427.00px;top:542.05px;font-size:14px;color:#b0871a;font-weight:400;">Warning</div><div class="t" style="right:271.40px;top:542.05px;font-size:14px;color:#b58a1e;font-weight:400;">8м 37с</div><div class="r" style="left:675.30px;top:536.00px;width:59.90px;height:26.00px;background:#d8e3e0;border-radius:13px;"></div><div class="t" style="left:684.50px;top:542.55px;font-size:13.4px;color:#111111;font-weight:400;">Closed</div><div class="t" style="left:817.00px;top:542.05px;font-size:14px;color:#111111;font-weight:400;">13.11.2024 10:31:0</div><div class="r" style="left:73.00px;top:-0.50px;width:1.00px;height:580.50px;background:#ececec;"></div><div class="r" style="left:128.00px;top:-0.50px;width:1.00px;height:580.50px;background:#ececec;"></div><div class="r" style="left:393.00px;top:-0.50px;width:1.00px;height:580.50px;background:#ececec;"></div><div class="r" style="left:525.00px;top:-0.50px;width:1.00px;height:580.50px;background:#ececec;"></div><div class="r" style="left:666.00px;top:-0.50px;width:1.00px;height:580.50px;background:#ececec;"></div><div class="r" style="left:807.00px;top:-0.50px;width:1.00px;height:580.50px;background:#ececec;"></div>
</div>
<div class="r" style="left:1269.00px;top:249.50px;width:8.00px;height:574.50px;background:#fafafa;"></div>
<div class="r" style="left:1270.60px;top:380.00px;width:5.80px;height:190.00px;background:#c9c9c9;border-radius:3px;"></div>
<div class="r" style="left:1277.00px;top:0.00px;width:789.00px;height:824.00px;background:#fff;"></div>
<div class="r" style="left:1277.00px;top:0.00px;width:1.00px;height:824.00px;background:#dcdde1;box-shadow:-1px 0 2px rgba(0,0,0,0.04);"></div>
<div class="r" style="left:1278.00px;top:0.00px;width:788.00px;height:41.00px;background:#f7f7f7;"></div>
<div class="t" style="left:1313.70px;top:14.56px;font-size:10.75px;color:#1a1a1a;font-weight:400;font-style:normal;font-family:'Liberation Mono', monospace;-webkit-text-stroke:0.2px #1a1a1a;">ID:6876792</div>
<svg class="r" style="left:1384.00px;top:11.50px;" width="15" height="15" viewBox="0 0 15 15"><rect x="4.3" y="0.8" width="9.5" height="10.5" rx="1.2" fill="none" stroke="#707070" stroke-width="1.4"/><path d="M1 4.2 V13 a1 1 0 0 0 1 1 H10" fill="none" stroke="#707070" stroke-width="1.4"/></svg>
<div class="t" style="left:1419.30px;top:12.92px;font-size:11.9px;color:#c3c3c3;font-weight:400;font-style:normal;font-family:'Liberation Sans', sans-serif;">Запустить бизнес-процесс</div>
<svg class="r" style="left:1568.00px;top:15.50px;" width="8" height="8" viewBox="0 0 8 8"><path d="M1 1.5 L4.0 6 L7 1.5" fill="none" stroke="#c3c3c3" stroke-width="1.3"/></svg>
<svg class="r" style="left:1889.00px;top:10.00px;" width="17" height="18" viewBox="0 0 17 18"><circle cx="12.5" cy="3" r="1.9" fill="none" stroke="#707070" stroke-width="1.4"/><circle cx="3" cy="8.8" r="1.9" fill="none" stroke="#707070" stroke-width="1.4"/><circle cx="12.5" cy="14.5" r="1.9" fill="none" stroke="#707070" stroke-width="1.4"/><path d="M4.7 7.8 L10.8 4 M4.7 9.8 L10.8 13.5" stroke="#707070" stroke-width="1.4"/></svg>
<svg class="r" style="left:1934.00px;top:11.00px;" width="16" height="16" viewBox="0 0 16 16"><path d="M7 1.5 H2.2 a1 1 0 0 0 -1 1 V13.7 a1 1 0 0 0 1 1 H13.3 a1 1 0 0 0 1 -1 V9" fill="none" stroke="#707070" stroke-width="1.5"/><path d="M4.5 11.3 L14 1.8 M9 1.5 H14.3 V6.8" fill="none" stroke="#707070" stroke-width="1.5"/></svg>
<div class="r" style="left:1968.50px;top:6.00px;width:1.50px;height:25.50px;background:#dcdcdc;"></div>
<svg class="r" style="left:1998.00px;top:12.00px;" width="14" height="14" viewBox="0 0 14 14"><path d="M9 1.5 H11.8 V4.3 M1.5 9.5 V12.3 H4.3" fill="none" stroke="#707070" stroke-width="1.5"/></svg>
<svg class="r" style="left:2042.00px;top:13.00px;" width="13" height="13" viewBox="0 0 13 13"><path d="M1 1 L12 12 M12 1 L1 12" stroke="#707070" stroke-width="1.5"/></svg>
<div class="t" style="left:1313.60px;top:70.96px;font-size:20.6px;color:#141414;font-weight:400;font-style:normal;font-family:'Liberation Sans', sans-serif;-webkit-text-stroke:0.5px #141414;">AgentPlus SOD is down</div>
<div class="r" style="left:1569.00px;top:63.20px;width:60.00px;height:34.50px;background:#fdeeea;border-radius:17px;"></div>
<div class="t" style="left:1577.70px;top:73.90px;font-size:13.7px;color:#c8401a;font-weight:400;font-style:normal;font-family:'Liberation Sans', sans-serif;">51м 8с</div>
<div class="t" style="left:1315.50px;top:132.72px;font-size:14.15px;color:#1f5fe0;font-weight:400;font-style:normal;font-family:'Liberation Sans', sans-serif;">Основная информация</div>
<div class="t" style="left:1500.40px;top:132.80px;font-size:14.05px;color:#111111;font-weight:400;font-style:normal;font-family:'Liberation Sans', sans-serif;">События</div>
<div class="t" style="left:1590.00px;top:132.85px;font-size:14px;color:#111111;font-weight:400;font-style:normal;font-family:'Liberation Sans', sans-serif;">Вложения</div>
<div class="r" style="left:1278.00px;top:156.50px;width:788.00px;height:1.00px;background:#e5e5e5;"></div>
<div class="r" style="left:1313.00px;top:155.00px;width:158.00px;height:2.80px;background:#1f5fe0;border-radius:1px;"></div>
<div class="r" style="left:1313.00px;top:175.50px;width:722.50px;height:34.50px;background:#fff;border:1px solid #e3e3e3;border-radius:5px;box-sizing:border-box;"></div>
<div class="t" style="left:1322.30px;top:186.18px;font-size:13.6px;color:#111111;font-weight:400;font-style:normal;font-family:'Liberation Sans', sans-serif;">AgentPlus SOD is down</div>
<div class="t" style="left:1313.00px;top:243.35px;font-size:14px;color:#111111;font-weight:400;font-style:normal;font-family:'Liberation Sans', sans-serif;">Кем создан</div>
<div class="t" style="left:1313.00px;top:294.95px;font-size:14px;color:#111111;font-weight:400;font-style:normal;font-family:'Liberation Sans', sans-serif;">Тип сигнала</div>
<div class="t" style="left:1313.00px;top:348.55px;font-size:14px;color:#111111;font-weight:400;font-style:normal;font-family:'Liberation Sans', sans-serif;">Статус</div>
<div class="t" style="left:1313.00px;top:401.15px;font-size:14px;color:#111111;font-weight:400;font-style:normal;font-family:'Liberation Sans', sans-serif;">Критичность</div>
<div class="t" style="left:1313.00px;top:454.45px;font-size:14px;color:#111111;font-weight:400;font-style:normal;font-family:'Liberation Sans', sans-serif;">Ответственный</div>
<div class="t" style="left:1313.00px;top:507.85px;font-size:14px;color:#111111;font-weight:400;font-style:normal;font-family:'Liberation Sans', sans-serif;">Связанные КЕ</div>
<div class="t" style="left:1313.00px;top:564.65px;font-size:14px;color:#111111;font-weight:400;font-style:normal;font-family:'Liberation Sans', sans-serif;">Теги</div>
<svg class="r" style="left:1499.00px;top:241.50px;" width="16" height="16" viewBox="0 0 16 16"><circle cx="7.6" cy="3.2" r="2" fill="none" stroke="#f0852f" stroke-width="1.3"/><circle cx="3" cy="11.5" r="2" fill="none" stroke="#f0852f" stroke-width="1.3"/><circle cx="12.4" cy="11.5" r="2" fill="none" stroke="#f0852f" stroke-width="1.3"/></svg>
<div class="t" style="left:1520.00px;top:242.52px;font-size:13.8px;color:#1f5fe0;font-weight:400;font-style:normal;font-family:'Liberation Sans', sans-serif;border-bottom:1px dotted #6f95e8;">Zabbix Event processor</div>
<div class="t" style="left:1670.00px;top:242.64px;font-size:13.65px;color:#111111;font-weight:400;font-style:normal;font-family:'Liberation Sans', sans-serif;">13.11.2024 12:04:58</div>
<svg class="r" style="left:1500.50px;top:290.30px;" width="22" height="22" viewBox="0 0 22 22"><circle cx="11" cy="11" r="10.8" fill="#f5a524"/><path d="M12.6 4.6 L6.4 11.7 L10.2 11.7 L9.4 17.4 L15.6 10.3 L11.8 10.3 Z" fill="#fff" stroke="#fff" stroke-width="0.5" stroke-linejoin="round"/></svg>
<div class="t" style="left:1529.00px;top:294.45px;font-size:14px;color:#111111;font-weight:400;font-style:normal;font-family:'Liberation Sans', sans-serif;">Сигнал</div>
<div class="r" style="left:1498.30px;top:337.00px;width:246.50px;height:35.20px;background:#fff;border:1px dashed #d8d8d8;border-radius:5px;box-sizing:border-box;"></div>
<div class="r" style="left:1504.00px;top:341.30px;width:59.00px;height:26.40px;background:#d8e3e0;border-radius:13px;"></div>
<div class="t" style="left:1512.80px;top:347.78px;font-size:13.6px;color:#111111;font-weight:400;font-style:normal;font-family:'Liberation Sans', sans-serif;">Closed</div>
<svg class="r" style="left:1718.50px;top:351.00px;" width="14" height="8" viewBox="0 0 14 8"><path d="M1 1.5 L7.0 6 L13 1.5" fill="none" stroke="#9c9c9c" stroke-width="1.5"/></svg>
<div class="r" style="left:1498.30px;top:390.00px;width:246.50px;height:34.30px;background:#fff;border:1px dashed #d8d8d8;border-radius:5px;box-sizing:border-box;"></div>
<div class="r" style="left:1503.40px;top:394.00px;width:26.10px;height:26.10px;background:#e23a1e;border-radius:50%;"></div>
<div class="t" style="left:1516.45px;top:400.45px;font-size:14px;color:#fff;font-weight:700;font-style:normal;font-family:'Liberation Sans', sans-serif;transform:translateX(-50%);">2</div>
<div class="t" style="left:1534.60px;top:400.65px;font-size:14px;color:#111111;font-weight:400;font-style:normal;font-family:'Liberation Sans', sans-serif;">Critical</div>
<svg class="r" style="left:1718.50px;top:403.50px;" width="14" height="8" viewBox="0 0 14 8"><path d="M1 1.5 L7.0 6 L13 1.5" fill="none" stroke="#9c9c9c" stroke-width="1.5"/></svg>
<div class="r" style="left:1498.40px;top:443.00px;width:245.80px;height:34.50px;background:#fff;border:1px dashed #d8d8d8;border-radius:5px;box-sizing:border-box;"></div>
<div class="t" style="left:1508.40px;top:453.53px;font-size:13.9px;color:#7a7a7a;font-weight:400;font-style:italic;font-family:'Liberation Sans', sans-serif;">Не выбрано</div>
<svg class="r" style="left:1718.50px;top:456.50px;" width="14" height="8" viewBox="0 0 14 8"><path d="M1 1.5 L7.0 6 L13 1.5" fill="none" stroke="#9c9c9c" stroke-width="1.5"/></svg>
<div class="t" style="left:1766.00px;top:454.06px;font-size:14.1px;color:#c2c2c2;font-weight:400;font-style:normal;font-family:'Liberation Sans', sans-serif;">Назначить меня</div>
<div class="r" style="left:1498.40px;top:496.00px;width:34.40px;height:34.00px;background:#f0f0f2;border-radius:6px;"></div>
<svg class="r" style="left:1509.60px;top:507.00px;" width="12" height="12" viewBox="0 0 12 12"><path d="M6 0.5v11M0.5 6h11" stroke="#1f5fe0" stroke-width="1.6" fill="none"/></svg>
<div class="r" style="left:1498.40px;top:553.50px;width:536.90px;height:34.10px;background:#fff;border:1px dashed #d8d8d8;border-radius:5px;box-sizing:border-box;"></div>
<div class="t" style="left:1507.60px;top:563.23px;font-size:13.9px;color:#2a2a2a;font-weight:400;font-style:italic;font-family:'Liberation Sans', sans-serif;">Не заполнено</div>
<svg class="r" style="left:1329.50px;top:628.00px;" width="12" height="16" viewBox="0 0 12 16"><path d="M2 1.8 L8.5 8 L2 14.2" fill="none" stroke="#1f5fe0" stroke-width="2"/></svg>
<div class="t" style="left:1357.60px;top:628.44px;font-size:14.6px;color:#111111;font-weight:400;font-style:normal;font-family:'Liberation Sans', sans-serif;-webkit-text-stroke:0.45px #111;">Метки</div>
<div class="t" style="left:1313.30px;top:690.67px;font-size:17.4px;color:#111;font-weight:400;font-style:normal;font-family:'Liberation Sans', sans-serif;-webkit-text-stroke:0.6px #111;">Запущенные бизнес-процессы</div>
<div class="t" style="left:1313.30px;top:721.64px;font-size:13.3px;color:#8a8a8a;font-weight:400;font-style:italic;font-family:'Liberation Sans', sans-serif;">Бизнес-процессов нет</div>
</body></html>
